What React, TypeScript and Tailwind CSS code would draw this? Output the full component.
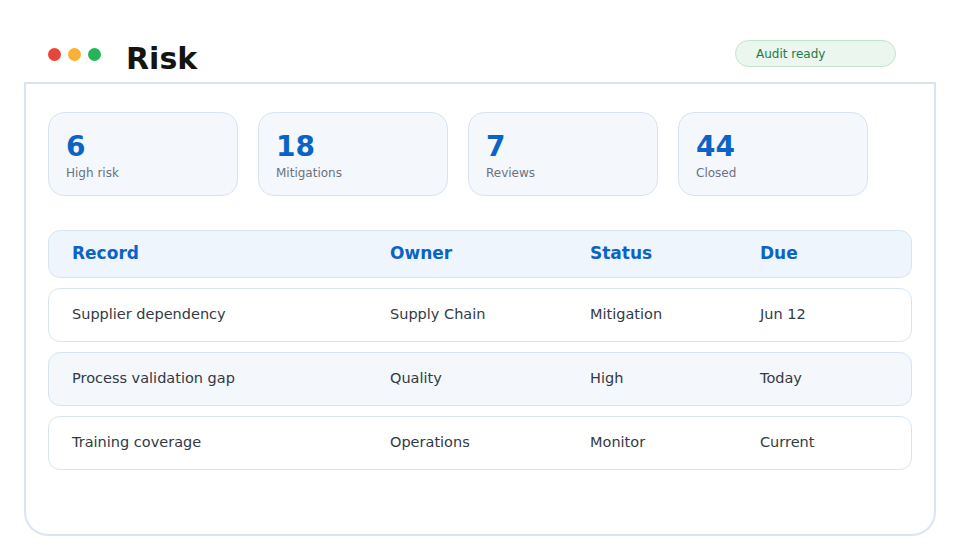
export default function App() {
  const stats = [
    { n: '6', l: 'High risk' },
    { n: '18', l: 'Mitigations' },
    { n: '7', l: 'Reviews' },
    { n: '44', l: 'Closed' },
  ];
  const rows = [
    ['Supplier dependency', 'Supply Chain', 'Mitigation', 'Jun 12'],
    ['Process validation gap', 'Quality', 'High', 'Today'],
    ['Training coverage', 'Operations', 'Monitor', 'Current'],
  ];
  return (
    <div className="w-[960px] h-[560px] bg-white relative" style={{ fontFamily: '"DejaVu Sans", sans-serif' }}>
      <div className="flex items-start h-[82px] px-[48px] pt-[40px]">
        <div className="flex gap-[7px] mt-[8px]">
          <span className="w-[13px] h-[13px] rounded-full bg-[#e8463a]" />
          <span className="w-[13px] h-[13px] rounded-full bg-[#f5b237]" />
          <span className="w-[13px] h-[13px] rounded-full bg-[#27b35a]" />
        </div>
        <div className="ml-[25px] -mt-[1px] text-[30px] leading-[40px] font-bold text-[#141414]">Risk</div>
        <div className="ml-auto mr-[16px] h-[27px] w-[161px] rounded-full border border-[#bfe6cc] bg-[#eaf6ee] text-[12px] text-[#1f7a45] flex items-center pl-[20px]">
          Audit ready
        </div>
      </div>
      <div className="mx-[24px] h-[454px] border-2 border-[#dbe5f0] rounded-b-[24px] px-[22px] pt-[28px]">
        <div className="flex gap-[20px]">
          {stats.map((s) => (
            <div key={s.l} className="w-[190px] h-[84px] rounded-[16px] bg-[#f4f7fb] border border-[#d8e4f0] pl-[17px] pt-[17px]">
              <div className="text-[28px] leading-[34px] font-bold text-[#0b63c5]">{s.n}</div>
              <div className="text-[12px] leading-[16px] text-[#6b7280] mt-[1px]">{s.l}</div>
            </div>
          ))}
        </div>
        <div className="mt-[34px] flex flex-col gap-[10px]">
          <div className="h-[48px] rounded-[12px] bg-[#eef5fd] border border-[#d8e4f0] flex items-center pl-[23px] text-[17px] font-bold text-[#0b63c5]">
            <div className="w-[318px]">Record</div>
            <div className="w-[200px]">Owner</div>
            <div className="w-[170px]">Status</div>
            <div>Due</div>
          </div>
          {rows.map((r, i) => (
            <div key={r[0]} className={`h-[54px] rounded-[12px] border border-[#d8e4f0] flex items-center pl-[23px] text-[14.5px] text-[#333a44] ${i % 2 === 1 ? 'bg-[#f4f7fb]' : 'bg-white'}`}>
              <div className="w-[318px]">{r[0]}</div>
              <div className="w-[200px]">{r[1]}</div>
              <div className="w-[170px]">{r[2]}</div>
              <div>{r[3]}</div>
            </div>
          ))}
        </div>
      </div>
    </div>
  );
}
